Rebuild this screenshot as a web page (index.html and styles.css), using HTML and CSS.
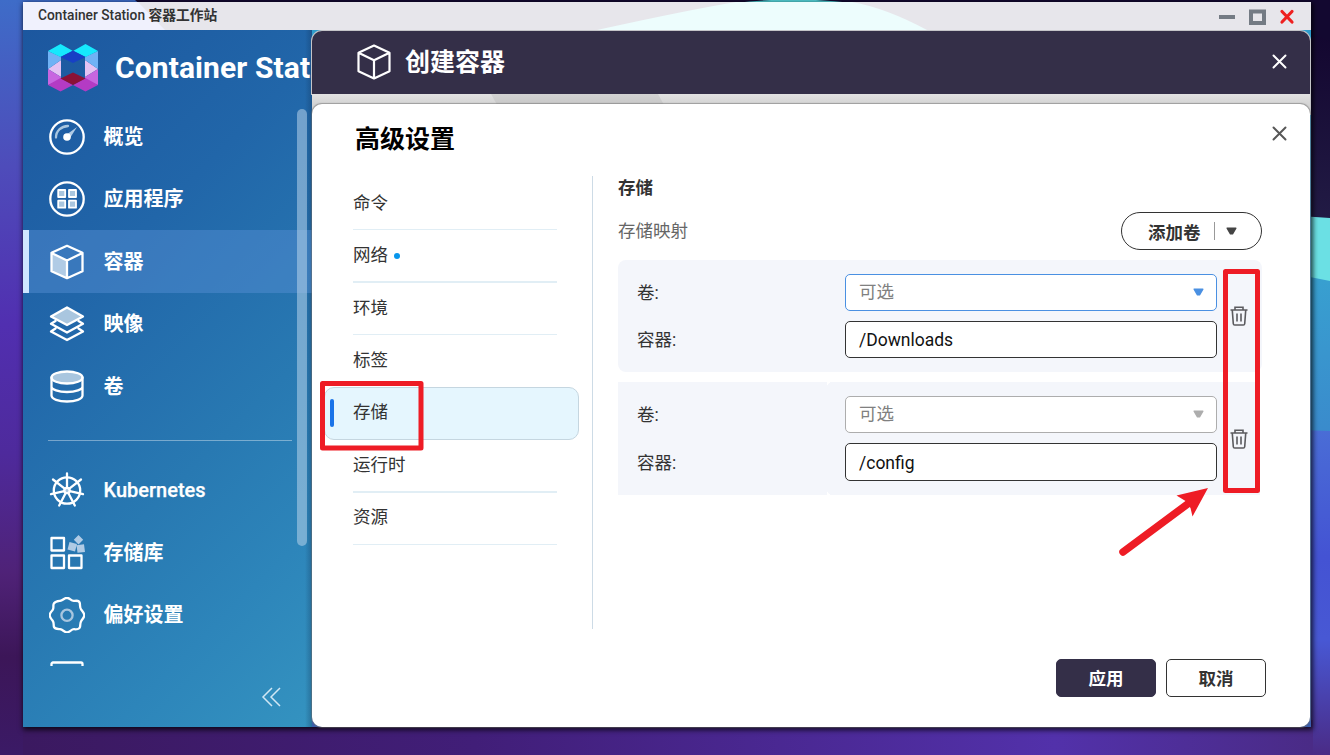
FILE: index.html
```html
<!DOCTYPE html>
<html lang="zh-CN">
<head>
<meta charset="utf-8">
<title>Container Station</title>
<link rel="stylesheet" href="styles.css">
</head>
<body>
<svg class="wallpaper" viewBox="0 0 1330 755" aria-hidden="true">
  <defs>
    <linearGradient id="wl" x1="0" y1="0" x2="0" y2="1"><stop offset="0" stop-color="#3e6cc8"/><stop offset=".22" stop-color="#4e4cba"/><stop offset=".43" stop-color="#512fb0"/><stop offset=".6" stop-color="#4e2a9c"/><stop offset=".76" stop-color="#4f2277"/><stop offset=".87" stop-color="#3c1658"/><stop offset="1" stop-color="#3b1a66"/></linearGradient>
    <linearGradient id="wb" x1="0" y1="0" x2="1" y2="0"><stop offset="0" stop-color="#3b1960"/><stop offset=".35" stop-color="#411e78"/><stop offset=".8" stop-color="#5231aa"/><stop offset="1" stop-color="#4a2b86"/></linearGradient>
    <linearGradient id="wr" x1="0" y1="0" x2="0" y2="1"><stop offset="0" stop-color="#4a6ed6"/><stop offset=".4" stop-color="#4453d3"/><stop offset=".65" stop-color="#4858d4"/><stop offset="1" stop-color="#4a2b86"/></linearGradient>
    <linearGradient id="wn" x1="0" y1="0" x2="0" y2="1"><stop offset="0" stop-color="#13062f"/><stop offset="1" stop-color="#221b45"/></linearGradient>
    <linearGradient id="wc" x1="0" y1="0" x2="0" y2="1"><stop offset="0" stop-color="#38a0d0"/><stop offset="1" stop-color="#3a8bcc"/></linearGradient>
  </defs>
  <path fill="#130830" d="M0 0h1330v755H0z"/>
  <path fill="url(#wl)" d="M0 0h135l60 50v705H0z"/>
  <path fill="#56d3d8" d="M735 3Q793-4 853 3z"/>
  <path fill="url(#wr)" d="M1300 425h30v330h-30z"/>
  <path fill="url(#wb)" d="M23 720h1290v35H23z"/>
  <path fill="url(#wn)" d="M1300 28l30 13v180h-30z"/>
  <path fill="#6be0e4" d="M1300 216l30 2v70h-30z"/>
  <path fill="url(#wc)" d="M1300 275l30 6v150l-30-1z"/>
</svg>

<div class="window">
  <header class="titlebar">
    <svg class="titlebar-art" viewBox="0 0 1288 28" aria-hidden="true"><path fill="#f0f1fd" d="M0 0h115l27 28H0z"/><path fill="#edfdfd" d="M574 28Q665 8 713 0h116Q863 6 904 28z"/></svg>
    <span class="titlebar-name">Container Station <b>容器工作站</b></span>
    <svg class="titlebar-buttons" width="78" height="20" viewBox="0 0 78 20" fill="none">
      <path stroke="#747b84" stroke-width="4" d="M1 10h16M33 4.500h13V16h-13z"/>
      <path stroke="#ee2020" stroke-width="3.200" stroke-linecap="round" d="M64 4.500l10 10.500M74 4.500L64 15"/>
    </svg>
  </header>

  <div class="window-body">
    <aside class="sidebar">
      <div class="brand">
        <svg width="50" height="48" viewBox="0 0 50 48">
          <path fill="#e4c2f3" d="M0 25l13-9v17zM50 25l-13-9v17z"/>
          <path fill="#70b2f5" d="M0 7l13 6v3L0 25zM50 7l-13 6v3l13 9z"/>
          <path fill="#c866e0" d="M0 25l13 8v3L0 41zM50 25l-13 8v3l13 5z"/>
          <path fill="#16e9fd" d="M0 7l12.500-7L25 7l-12.500 6zM25 7l12.500-7L50 7l-12.500 6z"/>
          <path fill="#1740c5" d="M12.500 13L25 6.500 37.500 13 25 19z"/>
          <path fill="#b43bc4" d="M0 41l12.500-7L25 41l-12.500 6.500zM25 41l12.500-7L50 41l-12.500 6.500z"/>
          <path fill="#8b1136" d="M12.500 34.500L25 28.500l12.500 6L25 41z"/>
        </svg>
        <span class="brand-name">Container Station</span>
      </div>
      <nav class="nav">
        <a class="nav-item"><svg class="icon" viewBox="0 0 36 36"><circle cx="18" cy="18" r="16.700"/><path class="soft" d="M7 18.500C7 12 12 7.300 19 7"/><path class="soft-fill" d="M28 8L21 19l-4-3z"/><circle class="solid" cx="18" cy="18" r="3.800"/></svg>概览</a>
        <a class="nav-item"><svg class="icon" viewBox="0 0 36 36"><circle cx="18" cy="18" r="16.700"/><g class="thin tint"><path d="M9.200 9h7v7h-7zM20 9h7v7h-7zM9.200 19.700h7v7h-7zM20 19.700h7v7h-7z"/></g></svg>应用程序</a>
        <a class="nav-item active"><svg class="icon" viewBox="0 0 36 36"><path class="soft-fill" d="M2 9l16 8v17L2 27z"/><path d="M18 1.800l15.500 7v18.500L18 34.200 2.500 27.300V8.800zM2.500 9L18 16.500 33.500 9M18 16.500V34"/></svg>容器</a>
        <a class="nav-item"><svg class="icon" viewBox="0 0 36 36"><path class="tint" d="M18 1.500l16 9L18 19 2 10.500z"/><path d="M6.500 15L2 17.800 18 26.500l16-8.700-4.500-2.800M6.500 22.500L2 25.500 18 34l16-8.500-4.500-3"/></svg>映像</a>
        <a class="nav-item"><svg class="icon" viewBox="0 0 36 36"><ellipse class="tint" cx="18" cy="8.500" rx="15.500" ry="6"/><path d="M2.500 8.500v18c0 3.500 7 6 15.500 6s15.500-2.500 15.500-6v-18M2.500 17.500c0 3 7 5.500 15.500 5.500s15.500-2.500 15.500-5.500"/></svg>卷</a>
        <div class="nav-divider"></div>
        <a class="nav-item latin"><svg class="icon" viewBox="0 0 36 36"><circle cx="18" cy="18.500" r="13.200"/><circle class="tint" cx="18" cy="18.500" r="2.700"/><path d="M18 1.500v14M20.300 16.700L32 7.500M20.800 19.200l13.200 3M19.300 21l6.500 12.500M16.700 21l-6.500 12.500M15.200 19.200L2 22.200M15.700 16.700L4 7.500"/></svg>Kubernetes</a>
        <a class="nav-item"><svg class="icon" viewBox="0 0 36 36"><path d="M2.500 3h12.500v12.500H2.500zM2.500 20.500h12.500V33H2.500zM20 20.500h12.500V33H20z"/><path class="soft-fill" d="M29.500 0l4.700 4.700-4.700 4.700-4.700-4.700zM20.500 7l7.500 2-2 7.500-7.500-2zM27.500 10.300l7.500-1 1 7.700-7.500.8z"/></svg>存储库</a>
        <a class="nav-item"><svg class="icon" viewBox="0 0 36 36"><path class="gear" d="M18 .8C21 1 22 4.200 25 3.900s5.300-.6 5.800 2.100-.3 4.500 1.500 6.800S35.300 16 35.300 18.300s-1.500 3.200-3 5.500-.8 4.300-1.300 6.200-3.500 2.600-5.800 2.200S20.300 35.500 18 35.500s-4.200-3-7-3.300-5.300-.3-6-2.200.3-4-1.300-6.200S.7 20.600.7 18.300s1.400-3.200 3-5.500-.2-4.500 1.300-6.500S8.200 4.200 11 3.900 15.500.8 18 .8z"/><circle class="soft" cx="18" cy="18.300" r="5.600"/></svg>偏好设置</a>
        <a class="nav-item"><svg class="icon" viewBox="0 0 36 36"><rect x="2.500" y="2.500" width="31" height="30" rx="1.500"/></svg></a>
      </nav>
      <div class="scrollbar"></div>
      <div class="sidebar-foot"><svg width="20" height="20" viewBox="0 0 20 20" fill="none" stroke="#d0e7f5" stroke-width="1.500"><path d="M11 1L2 10l9 9M19 1l-9 9 9 9"/></svg></div>
    </aside>

    <main class="panel">
      <header class="panel-head">
        <svg width="36" height="36" viewBox="0 0 36 36" fill="none" stroke="#fff" stroke-width="2.200" stroke-linejoin="round"><path d="M18 1.500l15.500 7.300v18.400L18 34.500 2.500 27.200V8.800zM2.500 8.800L18 16.200l15.500-7.400M18 16.200v18"/></svg>
        <h1>创建容器</h1>
        <svg class="close" width="15" height="15" viewBox="0 0 15 15" fill="none" stroke="#fff" stroke-width="2" stroke-linecap="round"><path d="M1.500 1.500l12 12M13.500 1.500l-12 12"/></svg>
      </header>
      <div class="panel-strip"></div>

      <section class="dialog">
        <div class="dialog-head">
          <h2>高级设置</h2>
          <svg width="15" height="15" viewBox="0 0 15 15" fill="none" stroke="#575757" stroke-width="2" stroke-linecap="round"><path d="M1.500 1.500l12 12M13.500 1.500l-12 12"/></svg>
        </div>
        <div class="dialog-body">
          <ul class="tabs">
            <li>命令</li>
            <li class="thick">网络<i class="dot"></i></li>
            <li>环境</li>
            <li class="before-active">标签</li>
            <li class="selected">存储</li>
            <li class="thick">运行时</li>
            <li>资源</li>
          </ul>
          <div class="content">
            <h3>存储</h3>
            <div class="mapping-head">
              <span>存储映射</span>
              <button class="add">添加卷<i class="bar"></i><svg width="11" height="9" viewBox="0 0 11 9"><path fill="#444" stroke="#444" stroke-width="1.500" stroke-linejoin="round" d="M1.200 1.200h8.600L6.500 6.800h-2z"/></svg></button>
            </div>
            <div class="card first">
              <div class="fields">
                <label>卷:</label>
                <div class="field select focus">可选<svg width="11" height="9" viewBox="0 0 11 9"><path fill="#4a90e2" stroke="#4a90e2" stroke-width="1.500" stroke-linejoin="round" d="M1.200 1.200h8.600L6.500 6.800h-2z"/></svg></div>
                <label>容器:</label>
                <div class="field">/Downloads</div>
              </div>
              <svg class="trash" width="18" height="20" viewBox="0 0 18 20"><path d="M.5 4h17M5 4V1.300h8V4M2.300 4.500l1 13.200q.1 1.300 1.400 1.300h8.600q1.300 0 1.400-1.300l1-13.200M7 7.500v8M11 7.500v8"/></svg>
            </div>
            <div class="card second">
              <div class="fields">
                <label>卷:</label>
                <div class="field select">可选<svg width="11" height="9" viewBox="0 0 11 9"><path fill="#adadad" stroke="#adadad" stroke-width="1.500" stroke-linejoin="round" d="M1.200 1.200h8.600L6.500 6.800h-2z"/></svg></div>
                <label>容器:</label>
                <div class="field last">/config</div>
              </div>
              <svg class="trash" width="18" height="20" viewBox="0 0 18 20"><path d="M.5 4h17M5 4V1.300h8V4M2.300 4.500l1 13.200q.1 1.300 1.400 1.300h8.600q1.300 0 1.400-1.300l1-13.200M7 7.500v8M11 7.500v8"/></svg>
            </div>
          </div>
        </div>
        <footer class="dialog-foot">
          <button class="btn primary">应用</button>
          <button class="btn">取消</button>
        </footer>
      </section>
    </main>
  </div>
</div>

<svg class="annotations" viewBox="0 0 1330 755" aria-hidden="true">
  <g fill="none" stroke="#ee1c25" stroke-width="5" stroke-linejoin="round">
    <rect x="322.500" y="383.500" width="98.500" height="64.500"/>
    <rect x="1225.500" y="271.500" width="32" height="219"/>
  </g>
  <path stroke="#ee1c25" stroke-width="7.500" stroke-linecap="round" d="M1123 552l66-49"/>
  <path fill="#ee1c25" d="M1208 488l-31.500 7.500 9 5.500 5 7 2 8.500z"/>
</svg>
</body>
</html>
```

FILE: styles.css
```css
* { box-sizing: border-box; }
body {
  margin: 0;
  width: 1330px;
  height: 755px;
  overflow: hidden;
  padding: 2px 19px 28px 23px;
  font-family: Roboto, "Noto Sans CJK SC", sans-serif;
  font-size: 17.5px;
  color: #333;
  background: #130830;
}
h1, h2, h3, ul { margin: 0; padding: 0; }
svg { display: block; flex: none; }
button { font: inherit; cursor: pointer; }

.wallpaper, .annotations { position: absolute; left: 0; top: 0; width: 1330px; height: 755px; }
.annotations { pointer-events: none; }

.window {
  position: relative;
  width: 1288px;
  height: 725px;
  display: flex;
  flex-direction: column;
  box-shadow: 1px 2px 5px 1px rgba(0, 0, 0, .75);
}
.titlebar {
  position: relative;
  height: 28px;
  flex: none;
  display: flex;
  align-items: center;
  justify-content: space-between;
  padding: 0 15px 2px 15px;
  background: #e7e6eb;
}
.titlebar-art { position: absolute; left: 0; top: 0; width: 1288px; height: 28px; }
.titlebar-name { position: relative; font-size: 13.75px; line-height: 20px; font-weight: 500; color: #333; }
.titlebar-name b { font-weight: 700; }
.titlebar-buttons { position: relative; margin-top: 3px; }

.window-body {
  flex: 1;
  min-height: 0;
  display: flex;
  background: linear-gradient(#2f9dcc, #3b5fae);
}

/* Sidebar */
.sidebar {
  position: relative;
  width: 289px;
  flex: none;
  overflow: hidden;
  display: flex;
  flex-direction: column;
  color: #fff;
  background:
    linear-gradient(90deg, transparent 282px, rgba(15, 45, 80, .32) 289px),
    linear-gradient(135deg, #1c579f 0, #2166a9 226px, #2879b2 430px, #2d85ba 558px, #3493c0 697px);
}
.brand { height: 75px; flex: none; display: flex; align-items: center; gap: 17px; padding-left: 25px; }
.brand-name { font-size: 30px; font-weight: 700; line-height: 36px; letter-spacing: .1px; white-space: nowrap; }
.nav { height: 561px; flex: none; overflow: hidden; }
.nav-item {
  height: 62.5px;
  display: flex;
  align-items: center;
  gap: 19px;
  padding: 1px 0 0 25.500px;
  font-size: 20px;
  font-weight: 700;
  line-height: 30px;
}
.nav-item.latin { font-weight: 500; -webkit-text-stroke: .25px #fff; }
.nav-item.active { background: rgba(90, 145, 215, .43); box-shadow: inset 6px 0 #cfe6ff; }
.nav-divider { height: 1px; margin: 22.500px 20px 17.250px 25px; background: rgba(255, 255, 255, .38); }
.icon { width: 36px; height: 36px; fill: none; stroke: #fff; stroke-width: 2.300; stroke-linejoin: round; stroke-linecap: round; }
.icon .soft { stroke: #a9c6df; }
.icon .soft-fill { fill: #b0cbe5; stroke: none; }
.icon .tint { fill: #a9c6df; }
.icon .thin { stroke-width: 1.800; }
.icon .solid { fill: #fff; stroke: none; }
.scrollbar { position: absolute; left: 274px; top: 79px; width: 10px; height: 437px; border-radius: 5px; background: rgba(190, 215, 235, .52); }
.sidebar-foot { flex: 1; display: flex; justify-content: flex-end; align-items: center; padding: 0 31px 0 0; }

/* Panel */
.panel { position: relative; flex: 1; min-width: 0; display: flex; flex-direction: column; padding: 1px 1px 0 0; }
.panel-head {
  height: 63px;
  flex: none;
  display: flex;
  align-items: center;
  padding: 0 23px 1px 43.500px;
  border-radius: 10px 10px 0 0;
  box-shadow: 0 0 0 1px #c4c4c8;
  background: #342f48;
  color: #fff;
}
.panel-head h1 { flex: 1; margin: 1px 0 0 13.500px; font-size: 25px; font-weight: 700; line-height: 36px; }
.close { margin-bottom: 2px; }
.panel-strip {
  position: relative;
  height: 21px;
  margin-bottom: -11px;
  flex: none;
  overflow: hidden;
  background: linear-gradient(#e2e2e2, #d4d4d4 10px);
  box-shadow: 1px 0 #c4c4c8;
}
.panel-strip::before { content: ""; position: absolute; left: 179px; top: 0; width: 167px; height: 10px; background: linear-gradient(#d3d3d3, #c8c8c8); transform: skewX(29deg); transform-origin: 0 0; }
.dialog {
  position: relative;
  flex: 1;
  min-height: 0;
  display: flex;
  flex-direction: column;
  border-radius: 10px;
  background: #fff;
  box-shadow: 0 0 1px 1px rgba(110, 110, 110, .55);
}
.dialog-head { height: 60px; flex: none; display: flex; justify-content: space-between; padding: 0 23px 2px 43px; align-items: center; }
.dialog-head h2 { padding-top: 14px; font-size: 25px; font-weight: 700; line-height: 36px; color: #000; }
.dialog-body { height: 453px; margin-top: 12px; display: flex; flex: none; }
.tabs { width: 281px; flex: none; list-style: none; padding: 2px 13px 0 12px; border-right: 1px solid #cddbe6; }
.tabs li {
  height: 52.450px;
  margin: 0 22px 0 29px;
  padding-bottom: 2px;
  display: flex;
  align-items: center;
  border-bottom: 1px solid #e1eef5;
  line-height: 26px;
}
.tabs li.thick { border-bottom-width: 2px; padding-bottom: 1px; }
.tabs li.before-active { border-color: transparent; }
.tabs li.selected {
  position: relative;
  height: 53.450px;
  margin: -1px 0 0;
  padding-left: 28px;
  border: 1px solid #c5d6e0;
  border-radius: 10px;
  background: #e5f6fe;
}
.tabs li.selected::before { content: ""; position: absolute; left: 5px; top: 11px; width: 4px; height: 28px; border-radius: 2px; background: #1a73e8; }
.dot { width: 6px; height: 6px; margin: 1px 0 0 6px; border-radius: 50%; background: #0796ec; }
.content { width: 669px; padding-left: 25px; }
h3 { height: 24px; font-size: 17.5px; line-height: 24px; font-weight: 700; }
.mapping-head { height: 38px; margin: 12px 0 10px; display: flex; align-items: center; justify-content: space-between; color: #666; }
.mapping-head > span { margin-bottom: 3px; }
.add {
  width: 141px;
  height: 38px;
  display: flex;
  align-items: center;
  padding: 0 0 0 26px;
  border: 1px solid #333;
  border-radius: 19px;
  background: #fff;
  color: #333;
  font-weight: 700;
}
.bar { width: 1.500px; height: 18px; margin: 0 11px 0 13px; background: #999; }
.card { position: relative; height: 112px; display: flex; align-items: center; background: #f4f6fb; }
.card.first { border-radius: 8px; }
.card.second {
  width: 642px;
  height: 113px;
  margin-top: 10px;
  background:
    radial-gradient(circle at 6px 6px, transparent 6px, #fff 6.500px) 209px 0 / 6px 6px no-repeat,
    radial-gradient(circle at 6px 0, transparent 6px, #fff 6.500px) 209px 107px / 6px 6px no-repeat,
    #f4f6fb;
}
.card.second .fields { grid-template-rows: 37px 38px; }
.fields {
  width: 599px;
  flex: none;
  display: grid;
  grid-template-columns: 208px 372px;
  grid-template-rows: 37px 37px;
  row-gap: 10px;
  padding-left: 19px;
}
.fields label { align-self: center; padding-bottom: 2px; }
.field {
  display: flex;
  align-items: center;
  justify-content: space-between;
  padding: 0 12px 0 13px;
  border: 1px solid #333;
  border-radius: 5px;
  background: #fff;
  color: #111;
}
.field.last { padding-top: 1px; }
.field.select { padding-bottom: 4px; border-color: #adadad; color: #808080; }
.field.select svg { margin-top: 4px; }
.field.select.focus { border-color: #4a90e2; }
.trash { margin-left: 13px; fill: none; stroke: #5b5b5f; stroke-width: 1.600; }

.dialog-foot { flex: 1; display: flex; justify-content: flex-end; align-items: center; gap: 10px; padding: 0 44px 0 0; margin-top: -1px; }
.btn { width: 100px; height: 38px; padding: 0; border: 1px solid #333; border-radius: 5px; background: #fff; color: #333; font-weight: 700; }
.btn.primary { background: #342f48; border-color: #342f48; color: #fff; }
```
